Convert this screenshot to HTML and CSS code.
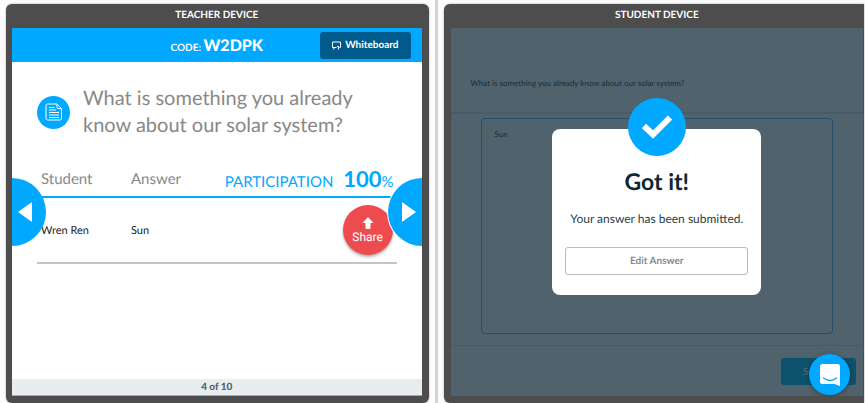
FILE: index.html
```html
<!DOCTYPE html>
<html lang="en">
<head>
    <meta charset="UTF-8">
    <meta name="viewport" content="width=device-width, initial-scale=1.0">
    <title>Teacher and Student Devices</title>
    <link rel="stylesheet" href="styles.css">
</head>
<body>
    <main class="devices">
        <section class="device teacher">
            <h2 class="device-title">TEACHER DEVICE</h2>
            <div class="screen">
                <header class="topbar">
                    <p class="code">CODE: <strong>W2DPK</strong></p>
                    <button type="button" class="whiteboard">
                        <svg width="9" height="9" viewBox="0 0 9 9" fill="none" stroke="currentColor" aria-hidden="true">
                            <path d="M4.5 6.5H.5V1H8.5V6.5H7.5M2.5 6.5L1.5 8.5M5 5.5H6.5V8.5"/>
                        </svg>
                        Whiteboard
                    </button>
                </header>

                <div class="question">
                    <span class="question-icon">
                        <svg width="18" height="18" viewBox="0 0 18 18" fill="none" stroke="currentColor" aria-hidden="true">
                            <path d="M2.5 1H12L16.5 5.5V15.5Q16.5 17 15 17H2.5Q1 17 1 15.5V2.5Q1 1 2.5 1ZM12 1V4.5Q12 5.5 13 5.5H16.5"/>
                            <path d="M4 4.5H9.5M4 7H11M4 9.5H14M4 12H14M4 14.5H14"/>
                        </svg>
                    </span>
                    <h1>What is something you already know about our solar system?</h1>
                </div>

                <table class="answers">
                    <thead>
                        <tr>
                            <th class="col-student">Student</th>
                            <th class="col-answer">Answer</th>
                            <th class="participation">PARTICIPATION <strong>100</strong><small>%</small></th>
                        </tr>
                    </thead>
                    <tbody>
                        <tr>
                            <td>Wren Ren</td>
                            <td>Sun</td>
                            <td>
                                <button type="button" class="share">
                                    <svg width="12" height="12" viewBox="0 0 12 12" fill="currentColor" aria-hidden="true">
                                        <path d="M6 0L11.5 6H8.5V11Q8.5 12 7.5 12H4.5Q3.5 12 3.5 11V6H.5Z"/>
                                    </svg>
                                    Share
                                </button>
                            </td>
                        </tr>
                    </tbody>
                </table>

                <button type="button" class="nav nav-prev" aria-label="Previous">
                    <svg width="14" height="20" viewBox="0 0 14 20" fill="currentColor" aria-hidden="true"><path d="M14 0V20L0 10Z"/></svg>
                </button>
                <button type="button" class="nav nav-next" aria-label="Next">
                    <svg width="14" height="20" viewBox="0 0 14 20" fill="currentColor" aria-hidden="true"><path d="M0 0V20L14 10Z"/></svg>
                </button>

                <footer class="pager">4 of 10</footer>
            </div>
        </section>

        <div class="divider"></div>

        <section class="device student">
            <h2 class="device-title">STUDENT DEVICE</h2>
            <div class="screen">
                <label class="prompt" for="answer">What is something you already know about our solar system?</label>
                <div class="answer-area">
                    <textarea id="answer">Sun</textarea>
                </div>
                <div class="actions">
                    <button type="button" class="submit">Submit</button>
                </div>

                <div class="overlay">
                    <div class="modal" role="dialog" aria-labelledby="modal-title">
                        <span class="modal-badge">
                            <svg width="30" height="24" viewBox="0 0 30 24" fill="none" stroke="currentColor" stroke-width="6" aria-hidden="true">
                                <path d="M2 11L11 19.5L28 2.5"/>
                            </svg>
                        </span>
                        <h3 id="modal-title">Got it!</h3>
                        <p>Your answer has been submitted.</p>
                        <button type="button" class="edit">Edit Answer</button>
                    </div>
                </div>

                <button type="button" class="chat" aria-label="Open chat">
                    <svg width="20" height="22" viewBox="0 0 20 22" aria-hidden="true">
                        <path fill="#fff" d="M2.5 0H17.5Q20 0 20 2.5V22L14.5 20H2.5Q0 20 0 17.5V2.5Q0 0 2.5 0Z"/>
                        <path fill="none" stroke="#00a8ff" stroke-width="1.3" stroke-linecap="round" d="M3.5 14Q10 19 16.5 14"/>
                    </svg>
                </button>
            </div>
        </section>
    </main>
</body>
</html>
```
FILE: styles.css
```css
* {
    box-sizing: border-box;
}
body {
    margin: 0;
    background-color: #fcfcfc;
    font-family: Lato, sans-serif;
    text-rendering: geometricPrecision;
    color: #222;
}
h1, h2, h3, p {
    margin: 0;
    font-weight: normal;
}
button {
    border: none;
    padding: 0;
    font-family: inherit;
    text-rendering: inherit;
    cursor: pointer;
}
svg {
    display: block;
}
.devices {
    display: grid;
    grid-template-columns: 201fr 3px 200fr;
    column-gap: 6px;
    min-height: 100vh;
    padding: 4px 1px 0 6px;
}
.divider {
    margin-top: -4px;
    background-color: #cdd5dc;
}

/* Device frames */
.device {
    display: flex;
    flex-direction: column;
    padding: 0 7px 7px 6px;
    border-radius: 6px;
    background-color: #4d4d4d;
    box-shadow: 0 0 2px #999;
}
.device-title {
    font-size: 10px;
    font-weight: bold;
    line-height: 22px;
    padding-bottom: 2px;
    text-align: center;
    color: white;
}
.screen {
    position: relative;
    flex: 1;
    display: flex;
    flex-direction: column;
    overflow: hidden;
    background-color: white;
}
.student {
    padding: 0 1px 7px 7px;
    border-top-right-radius: 0;
    border-bottom-right-radius: 0;
}

/* Teacher */
.topbar {
    display: grid;
    grid-template-columns: 1fr auto 1fr;
    align-items: center;
    height: 34px;
    padding: 0 11px;
    background-color: #00a8ff;
    color: white;
}
.code {
    grid-column: 2;
    font-size: 10px;
    font-weight: bold;
}
.code strong {
    font-size: 16px;
}
.whiteboard {
    justify-self: end;
    display: flex;
    align-items: center;
    gap: 4px;
    height: 27px;
    padding: 0 12px;
    border-radius: 3px;
    background-color: #005a8c;
    color: white;
    font-size: 10px;
    font-weight: bold;
}
.question {
    display: flex;
    align-items: center;
    gap: 13px;
    padding: 23px 25px 0;
}
.question-icon {
    flex: none;
    display: grid;
    place-items: center;
    width: 33px;
    height: 33px;
    border-radius: 50%;
    background-color: #00a8ff;
    color: white;
}
.question h1 {
    max-width: 290px;
    font-size: 20px;
    line-height: 27px;
    color: #888;
}
.answers {
    margin: 22px 25px 0;
    border-collapse: collapse;
    table-layout: fixed;
}
.answers th {
    height: 36px;
    padding: 0 4px;
    border-bottom: 2px solid #00a8ff;
    text-align: left;
    font-size: 15px;
    font-weight: normal;
    color: #888;
}
.answers td {
    height: 66px;
    padding: 0 4px;
    border-bottom: 2px solid #c4c4c4;
    font-size: 11px;
}
.col-student {
    width: 90px;
}
.col-answer {
    width: 92px;
}
.answers .participation {
    padding-right: 3px;
    text-align: right;
    white-space: nowrap;
    color: #00a8ff;
}
.participation strong {
    margin-left: 6px;
    font-size: 22px;
}
.participation small {
    font-size: 15px;
}
.share {
    display: flex;
    flex-direction: column;
    align-items: center;
    justify-content: center;
    gap: 1px;
    width: 50px;
    height: 50px;
    margin-left: auto;
    border-radius: 50%;
    background-color: #ee4b4f;
    box-shadow: 0 2px 3px rgba(0,0,0,0.3);
    color: white;
    font-family: Roboto, sans-serif;
    font-size: 12px;
}
.nav {
    position: absolute;
    top: 150px;
    display: flex;
    align-items: center;
    width: 34px;
    height: 68px;
    background-color: #00a8ff;
    color: white;
}
.nav-prev {
    left: 0;
    padding-left: 6px;
    border-radius: 0 34px 34px 0;
}
.nav-next {
    right: 0;
    padding-left: 14px;
    border-radius: 34px 0 0 34px;
    box-shadow: 0 0 0 1px white;
}
.pager {
    margin-top: auto;
    border-bottom: 1px solid #aaa;
    background-color: #e8edf0;
    color: #53636d;
    font-size: 10px;
    font-weight: 900;
    line-height: 16px;
    text-align: center;
}

/* Student */
.prompt {
    padding: 48px 20px 22px;
    border-bottom: 2px solid #e2eaf0;
    font-size: 8px;
    line-height: 14px;
    color: #46545c;
}
.answer-area {
    flex: 1;
    display: flex;
    padding: 4px 30px 11px;
    border-bottom: 1px solid #e2eaf0;
}
.answer-area textarea {
    flex: 1;
    padding: 10px 13px;
    border: 1px solid #70b8ff;
    border-radius: 4px;
    outline: none;
    resize: none;
    background-color: white;
    color: #46545c;
    font-family: inherit;
    font-size: 8px;
}
.actions {
    display: flex;
    justify-content: flex-end;
    padding: 12px 7px 11px;
}
.submit {
    width: 75px;
    height: 27px;
    border-radius: 3px;
    background-color: #20c8ff;
    color: white;
    font-size: 10px;
    font-weight: bold;
}
.overlay {
    position: absolute;
    inset: 0;
    display: grid;
    place-items: center;
    background-color: rgba(6,32,45,0.7);
}
.modal {
    position: relative;
    display: flex;
    flex-direction: column;
    width: 209px;
    padding: 36px 13px 20px;
    border-radius: 8px;
    background-color: white;
    text-align: center;
}
.modal-badge {
    position: absolute;
    top: -31px;
    left: 50%;
    display: grid;
    place-items: center;
    width: 58px;
    height: 58px;
    margin-left: -29px;
    border-radius: 50%;
    background-color: #00a8ff;
    color: white;
}
.modal h3 {
    font-size: 23px;
    font-weight: bold;
    line-height: 32px;
    color: #0c2733;
}
.modal p {
    margin: 14px 0 20px;
    font-size: 12px;
    line-height: 16px;
    white-space: nowrap;
    color: #2c424d;
}
.edit {
    height: 28px;
    border: 1px solid #b8bcbf;
    border-radius: 3px;
    background-color: white;
    color: #858b8f;
    font-size: 10px;
    font-weight: bold;
}
.chat {
    position: absolute;
    right: 13px;
    bottom: 1px;
    display: grid;
    place-items: center;
    width: 41px;
    height: 41px;
    border-radius: 50%;
    background-color: #00a8ff;
    box-shadow: 0 1px 5px rgba(0,0,0,0.35);
}
```
